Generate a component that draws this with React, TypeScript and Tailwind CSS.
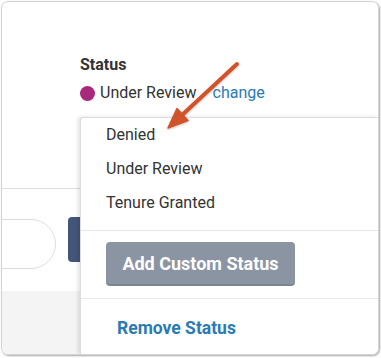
import React from 'react';

const items = ['Denied', 'Under Review', 'Tenure Granted'];

const Arrow = () => (
  <svg className="absolute left-0 top-0 pointer-events-none" width="381" height="358" viewBox="0 0 381 358">
    <defs>
      <filter id="arrowShadow" x="-20%" y="-20%" width="140%" height="140%">
        <feDropShadow dx="0" dy="1" stdDeviation="1" floodColor="#000" floodOpacity="0.25" />
      </filter>
    </defs>
    <g filter="url(#arrowShadow)" fill="#d1532a" stroke="#d1532a">
      <line x1="237" y1="63" x2="181" y2="115" strokeWidth="4" strokeLinecap="round" />
      <polygon points="168,127 188,119.5 177,107.5" strokeWidth="1.5" strokeLinejoin="round" />
    </g>
  </svg>
);

export default function App() {
  return (
    <div className="relative w-[381px] h-[358px] bg-white font-['Roboto',sans-serif] text-[#333]">
      <div className="relative ml-px mt-px w-[378px] h-[354px] flex flex-col border border-[#d4d4d4] rounded-[7px] overflow-hidden shadow-[1px_1px_2px_rgba(0,0,0,0.35)]">
        <section className="h-[187px] shrink-0 border-b border-[#dedede] pl-[78px] pt-[54px]">
          <h2 className="text-[16px] leading-[18px] font-bold text-[#333]">Status</h2>
          <div className="mt-[9px] flex items-center h-[20px]">
            <span className="inline-block h-[15px] w-[15px] rounded-full bg-[#a8297b]" />
            <span className="ml-[5px] text-[16px] leading-[20px]">Under Review</span>
            <span className="ml-[16px] text-[16px] leading-[20px] text-[#2a7bb3]">change</span>
          </div>
        </section>

        <section className="h-[102px] shrink-0 flex items-start">
          <div className="mt-[30px] -ml-[20px] w-[74px] h-[50px] rounded-r-[25px] border border-[#dcdcdc] bg-white" />
          <div className="mt-[28px] ml-[12px] w-[20px] h-[45px] rounded-[4px] bg-[#435579]" />
        </section>

        <footer className="flex-1 bg-[#f4f4f4]" />

        <div className="absolute left-[78px] top-[115px] right-0 bottom-0 bg-white border-l border-t border-[#dcdcdc] rounded-tl-[3px] shadow-[-2px_0_4px_rgba(0,0,0,0.12)] flex flex-col">
          <ul className="pl-[25px]">
            {items.map((label) => (
              <li key={label} className="h-[34px] flex items-center text-[16px] text-[#333]">
                {label}
              </li>
            ))}
          </ul>
          <div className="mt-[10px] border-t border-[#e8e8e8] pt-[11px] pb-[12px] pl-[25px]">
            <button className="w-[189px] h-[44px] rounded-[4px] bg-[#8a94a3] border-b-2 border-[#7b8594] text-white font-bold text-[18px]">
              Add Custom Status
            </button>
          </div>
          <div className="border-t border-[#e8e8e8] pl-[36px] pt-[18px] text-[17.5px] leading-[22px] font-bold text-[#2a7bb3]">
            Remove Status
          </div>
        </div>
      </div>
      <Arrow />
    </div>
  );
}
